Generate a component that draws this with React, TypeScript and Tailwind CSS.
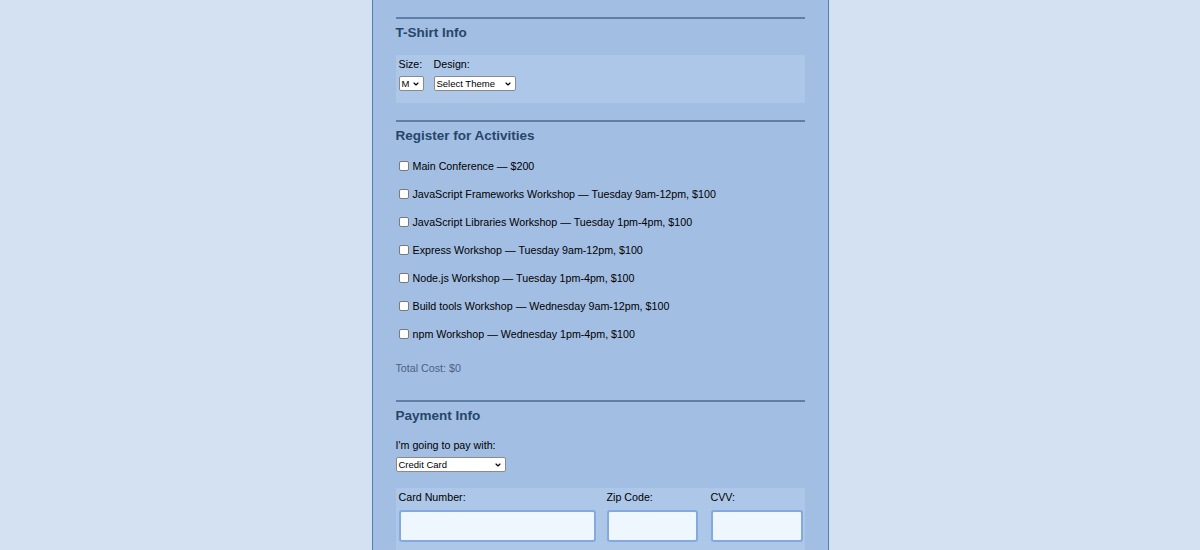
import { ChevronDown } from "lucide-react";

const activities = [
  "Main Conference — $200",
  "JavaScript Frameworks Workshop — Tuesday 9am-12pm, $100",
  "JavaScript Libraries Workshop — Tuesday 1pm-4pm, $100",
  "Express Workshop — Tuesday 9am-12pm, $100",
  "Node.js Workshop — Tuesday 1pm-4pm, $100",
  "Build tools Workshop — Wednesday 9am-12pm, $100",
  "npm Workshop — Wednesday 1pm-4pm, $100",
];

function Select({ value, className }: { value: string; className: string }) {
  return (
    <div className={`relative flex items-center h-[15px] bg-white border border-[#8a8a8a] rounded-[2px] pl-[2px] text-[9.5px] text-black ${className}`}>
      <span className="leading-none">{value}</span>
      <ChevronDown className="absolute right-[3px] top-[3px] size-[8px] text-black" strokeWidth={3.5} />
    </div>
  );
}

function Rule() {
  return <div className="h-[2px] bg-[#5f7fa6]" />;
}

function Heading({ children }: { children: string }) {
  return <h2 className="mt-[6px] h-[16px] leading-[16px] text-[13.5px] font-bold text-[#25476a]">{children}</h2>;
}

function TextInput({ className }: { className: string }) {
  return <input type="text" className={`h-[32px] bg-[#eef7fd] border-2 border-[#85a9de] rounded-[3px] outline-none ${className}`} />;
}

export default function App() {
  return (
    <div className="min-h-[550px] bg-[#d3e1f3] font-['Liberation_Sans',Arial,sans-serif] text-black">
      <div className="mx-auto w-[457px] min-h-[550px] bg-[#a3bee3] border-x border-[#5b7dab] px-[23px] pt-[17px]">
        <Rule />
        <Heading>T-Shirt Info</Heading>
        <div className="mt-[14px] h-[48px] bg-[#adc7e8] pl-[3px] pt-[3px] flex gap-[10px] text-[10.7px]">
          <div className="flex flex-col">
            <label className="h-[13px] leading-[13px]">Size:</label>
            <Select value="M" className="mt-[5px] w-[25px]" />
          </div>
          <div className="flex flex-col">
            <label className="h-[13px] leading-[13px]">Design:</label>
            <Select value="Select Theme" className="mt-[5px] w-[82px]" />
          </div>
        </div>

        <div className="mt-[17px]">
          <Rule />
        </div>
        <Heading>Register for Activities</Heading>
        <div className="mt-[8px] flex flex-col text-[10.7px]">
          {activities.map((a) => (
            <label key={a} className="h-[28px] flex items-center pl-[3px] gap-[4px]">
              <input type="checkbox" className="appearance-none size-[10px] bg-white border border-[#7a7a7a] rounded-[2px]" />
              <span>{a}</span>
            </label>
          ))}
        </div>
        <p className="mt-[13px] h-[14px] leading-[14px] text-[10.7px] text-[#4a6282]">Total Cost: $0</p>

        <div className="mt-[25px]">
          <Rule />
        </div>
        <Heading>Payment Info</Heading>
        <p className="mt-[14px] h-[14px] leading-[14px] text-[10.7px]">I'm going to pay with:</p>
        <Select value="Credit Card" className="mt-[5px] w-[110px]" />

        <div className="mt-[16px] bg-[#adc7e8] pl-[3px] pr-[4px] pt-[2px] pb-[8px] text-[10.7px]">
          <div className="flex">
            <div className="flex flex-col w-[197px]">
              <label className="h-[14px] leading-[14px]">Card Number:</label>
              <TextInput className="mt-[6px] w-[197px]" />
            </div>
            <div className="flex flex-col w-[91px] ml-[11px]">
              <label className="h-[14px] leading-[14px]">Zip Code:</label>
              <TextInput className="mt-[6px] w-[91px]" />
            </div>
            <div className="flex flex-col w-[92px] ml-[13px]">
              <label className="h-[14px] leading-[14px]">CVV:</label>
              <TextInput className="mt-[6px] w-[92px]" />
            </div>
          </div>
        </div>
      </div>
    </div>
  );
}
